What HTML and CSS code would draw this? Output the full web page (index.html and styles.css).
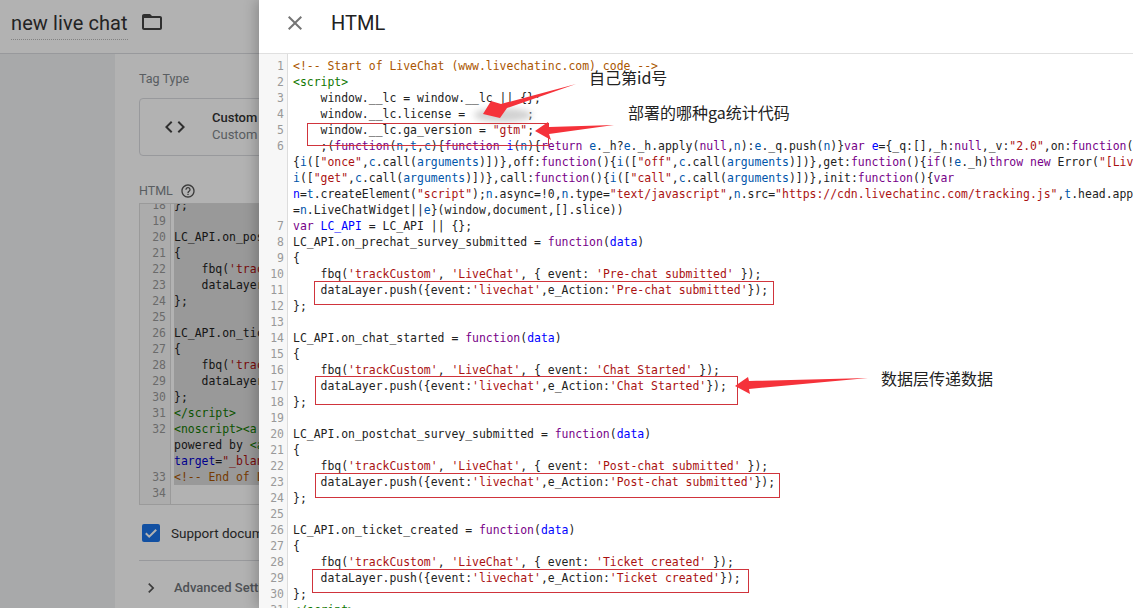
FILE: index.html
```html
<!DOCTYPE html>
<html lang="en">
<head>
<meta charset="utf-8">
<title>new live chat</title>
<link rel="stylesheet" href="styles.css">
</head>
<body>
<div class="app">
  <div class="under">
    <header class="topbar">
      <span class="title">new live chat</span>
      <svg class="folder" viewBox="0 0 24 24" width="24" height="24"><path d="M20 6h-8l-2-2H4c-1.1 0-1.99.9-1.99 2L2 18c0 1.1.9 2 2 2h16c1.1 0 2-.9 2-2V8c0-1.1-.9-2-2-2zm0 12H4V8h16v10z"/></svg>
    </header>
    <div class="stage">
      <section class="card">
        <div class="label">Tag Type</div>
        <div class="tile">
          <svg class="tile-icon" viewBox="0 0 24 24" width="24" height="24"><path d="M9.4 16.6 4.8 12l4.6-4.6L8 6l-6 6 6 6 1.4-1.4zm5.2 0 4.6-4.6-4.6-4.6L16 6l6 6-6 6-1.4-1.4z"/></svg>
          <div class="tile-text">
            <div class="tile-name">Custom HTML</div>
            <div class="tile-sub">Custom HTML Tag</div>
          </div>
        </div>
        <div class="html-label">
          <span class="label">HTML</span>
          <svg class="help" viewBox="0 0 24 24" width="16" height="16"><path d="M11 18h2v-2h-2v2zm1-16C6.48 2 2 6.48 2 12s4.48 10 10 10 10-4.48 10-10S17.52 2 12 2zm0 18c-4.41 0-8-3.59-8-8s3.590-8 8-8 8 3.590 8 8-3.590 8-8 8zm0-14c-2.210 0-4 1.790-4 4h2c0-1.100.9-2 2-2s2 .9 2 2c0 2-3 1.750-3 5h2c0-2.250 3-2.500 3-5 0-2.210-1.790-4-4-4z"/></svg>
        </div>
        <div class="mini-editor">
          <div class="mini-scroll">
            <div class="row"><span class="ln">18</span><code class="sel">};</code></div>
            <div class="row"><span class="ln">19</span><code class="sel"> </code></div>
            <div class="row"><span class="ln">20</span><code class="sel">LC_API.on_postchat_survey_submitted = <i class="k">function</i>(<i class="v">data</i>)</code></div>
            <div class="row"><span class="ln">21</span><code class="sel">{</code></div>
            <div class="row"><span class="ln">22</span><code class="sel">    fbq(<i class="s">'trackCustom'</i>, <i class="s">'LiveChat'</i>);</code></div>
            <div class="row"><span class="ln">23</span><code class="sel">    dataLayer.push({event:<i class="s">'livechat'</i>});</code></div>
            <div class="row"><span class="ln">24</span><code class="sel">};</code></div>
            <div class="row"><span class="ln">25</span><code class="sel"> </code></div>
            <div class="row"><span class="ln">26</span><code class="sel">LC_API.on_ticket_created = <i class="k">function</i>(<i class="v">data</i>)</code></div>
            <div class="row"><span class="ln">27</span><code class="sel">{</code></div>
            <div class="row"><span class="ln">28</span><code class="sel">    fbq(<i class="s">'trackCustom'</i>, <i class="s">'LiveChat'</i>);</code></div>
            <div class="row"><span class="ln">29</span><code class="sel">    dataLayer.push({event:<i class="s">'livechat'</i>});</code></div>
            <div class="row"><span class="ln">30</span><code class="sel">};</code></div>
            <div class="row"><span class="ln">31</span><code class="sel"><i class="t">&lt;/script&gt;</i></code></div>
            <div class="row"><span class="ln">32</span><code class="sel"><i class="t">&lt;noscript&gt;&lt;a</i> <i class="a">href</i>=<i class="s">"https://www.livechatinc.com/"</i></code></div>
            <div class="row"><span class="ln"></span><code class="sel">powered by <i class="t">&lt;a</i> <i class="a">href</i>=<i class="s">"https://www.livechatinc.com/"</i></code></div>
            <div class="row"><span class="ln"></span><code class="sel"><i class="a">target</i>=<i class="s">"_blank"</i>&gt;LiveChat&lt;/a&gt;</code></div>
            <div class="row"><span class="ln">33</span><code class="sel"><i class="c">&lt;!-- End of LiveChat code --&gt;</i></code></div>
            <div class="row"><span class="ln">34</span><code> </code></div>
          </div>
        </div>
        <div class="support">
          <svg class="checkbox" viewBox="0 0 18 18" width="18" height="18"><rect width="18" height="18" rx="2" fill="#1a73e8"/><path d="M3.8 9.300 7.200 12.700 14.200 5.700" fill="none" stroke="#fff" stroke-width="2"/></svg>
          <span class="support-text">Support document.write</span>
        </div>
        <div class="advanced">
          <svg class="chev" viewBox="0 0 24 24" width="20" height="20"><path d="M8.600 16.600 13.200 12 8.600 7.400 10 6l6 6-6 6z"/></svg>
          <span class="advanced-text">Advanced Settings</span>
        </div>
      </section>
    </div>
    <div class="scrim"></div>
  </div>

  <aside class="drawer">
    <header class="drawer-head">
      <svg class="close" viewBox="0 0 24 24" width="24" height="24"><path d="M19 6.400 17.600 5 12 10.600 6.400 5 5 6.400 10.600 12 5 17.600 6.400 19 12 13.400 17.600 19 19 17.600 13.400 12z"/></svg>
      <h1 class="drawer-title">HTML</h1>
    </header>
    <div class="editor">
      <div class="row"><span class="ln">1</span><code><i class="c">&lt;!-- Start of LiveChat (www.livechatinc.com) code --&gt;</i></code></div>
      <div class="row"><span class="ln">2</span><code><i class="t">&lt;script&gt;</i></code></div>
      <div class="row"><span class="ln">3</span><code>    window.__lc = window.__lc || {};</code></div>
      <div class="row"><span class="ln">4</span><code>    window.__lc.license =         ;</code></div>
      <div class="row"><span class="ln">5</span><code>    window.__lc.ga_version = <i class="s">"gtm"</i>;</code></div>
      <div class="row"><span class="ln">6</span><code>    ;(<i class="k">function</i>(<i class="v">n</i>,<i class="v">t</i>,<i class="v">c</i>){<i class="k">function</i> <i class="d">i</i>(<i class="v">n</i>){<i class="k">return</i> <i class="v">e</i>._h?<i class="v">e</i>._h.apply(<i class="k">null</i>,<i class="v">n</i>):<i class="v">e</i>._q.push(<i class="v">n</i>)}<i class="k">var</i> <i class="d">e</i>={_q:[],_h:<i class="k">null</i>,_v:<i class="s">"2.0"</i>,on:<i class="k">function</i>(){i(["on",c.call(arguments)])},once:<i class="k">function</i>()</code></div>
      <div class="row"><span class="ln"></span><code>{<i class="v">i</i>([<i class="s">"once"</i>,<i class="v">c</i>.call(<i class="v">arguments</i>)])},off:<i class="k">function</i>(){<i class="v">i</i>([<i class="s">"off"</i>,<i class="v">c</i>.call(<i class="v">arguments</i>)])},get:<i class="k">function</i>(){<i class="k">if</i>(!<i class="v">e</i>._h)<i class="k">throw</i> <i class="k">new</i> Error(<i class="s">"[LiveChatWidget] You can't use getters before load."</i>);</code></div>
      <div class="row"><span class="ln"></span><code><i class="v">i</i>([<i class="s">"get"</i>,<i class="v">c</i>.call(<i class="v">arguments</i>)])},call:<i class="k">function</i>(){<i class="v">i</i>([<i class="s">"call"</i>,<i class="v">c</i>.call(<i class="v">arguments</i>)])},init:<i class="k">function</i>(){<i class="k">var</i></code></div>
      <div class="row"><span class="ln"></span><code><i class="d">n</i>=<i class="v">t</i>.createElement(<i class="s">"script"</i>);<i class="v">n</i>.async=!0,<i class="v">n</i>.type=<i class="s">"text/javascript"</i>,<i class="v">n</i>.src=<i class="s">"https://cdn.livechatinc.com/tracking.js"</i>,<i class="v">t</i>.head.appendChild(<i class="v">n</i>)}};</code></div>
      <div class="row"><span class="ln"></span><code>=<i class="v">n</i>.LiveChatWidget||<i class="v">e</i>}(window,document,[].slice))</code></div>
      <div class="row"><span class="ln">7</span><code><i class="k">var</i> <i class="d">LC_API</i> = LC_API || {};</code></div>
      <div class="row"><span class="ln">8</span><code>LC_API.on_prechat_survey_submitted = <i class="k">function</i>(<i class="d">data</i>)</code></div>
      <div class="row"><span class="ln">9</span><code>{</code></div>
      <div class="row"><span class="ln">10</span><code>    fbq(<i class="s">'trackCustom'</i>, <i class="s">'LiveChat'</i>, { event: <i class="s">'Pre-chat submitted'</i> });</code></div>
      <div class="row"><span class="ln">11</span><code>    dataLayer.push({event:<i class="s">'livechat'</i>,e_Action:<i class="s">'Pre-chat submitted'</i>});</code></div>
      <div class="row"><span class="ln">12</span><code>};</code></div>
      <div class="row"><span class="ln">13</span><code> </code></div>
      <div class="row"><span class="ln">14</span><code>LC_API.on_chat_started = <i class="k">function</i>(<i class="d">data</i>)</code></div>
      <div class="row"><span class="ln">15</span><code>{</code></div>
      <div class="row"><span class="ln">16</span><code>    fbq(<i class="s">'trackCustom'</i>, <i class="s">'LiveChat'</i>, { event: <i class="s">'Chat Started'</i> });</code></div>
      <div class="row"><span class="ln">17</span><code>    dataLayer.push({event:<i class="s">'livechat'</i>,e_Action:<i class="s">'Chat Started'</i>});</code></div>
      <div class="row"><span class="ln">18</span><code>};</code></div>
      <div class="row"><span class="ln">19</span><code> </code></div>
      <div class="row"><span class="ln">20</span><code>LC_API.on_postchat_survey_submitted = <i class="k">function</i>(<i class="d">data</i>)</code></div>
      <div class="row"><span class="ln">21</span><code>{</code></div>
      <div class="row"><span class="ln">22</span><code>    fbq(<i class="s">'trackCustom'</i>, <i class="s">'LiveChat'</i>, { event: <i class="s">'Post-chat submitted'</i> });</code></div>
      <div class="row"><span class="ln">23</span><code>    dataLayer.push({event:<i class="s">'livechat'</i>,e_Action:<i class="s">'Post-chat submitted'</i>});</code></div>
      <div class="row"><span class="ln">24</span><code>};</code></div>
      <div class="row"><span class="ln">25</span><code> </code></div>
      <div class="row"><span class="ln">26</span><code>LC_API.on_ticket_created = <i class="k">function</i>(<i class="d">data</i>)</code></div>
      <div class="row"><span class="ln">27</span><code>{</code></div>
      <div class="row"><span class="ln">28</span><code>    fbq(<i class="s">'trackCustom'</i>, <i class="s">'LiveChat'</i>, { event: <i class="s">'Ticket created'</i> });</code></div>
      <div class="row"><span class="ln">29</span><code>    dataLayer.push({event:<i class="s">'livechat'</i>,e_Action:<i class="s">'Ticket created'</i>});</code></div>
      <div class="row"><span class="ln">30</span><code>};</code></div>
      <div class="row"><span class="ln">31</span><code><i class="t">&lt;/script&gt;</i></code></div>
    </div>
  </aside>

  <div class="smudge"></div>
  <svg class="markup" viewBox="0 0 1133 608" width="1133" height="608">
    <g class="boxes">
      <rect x="307.500" y="123.500" width="241" height="22"/>
      <rect x="314.500" y="281.500" width="459" height="23"/>
      <rect x="315.500" y="376.500" width="422" height="28"/>
      <rect x="315.500" y="473.500" width="464" height="24"/>
      <rect x="312.500" y="569.500" width="436" height="23"/>
    </g>
    <g class="arrows">
      <polygon points="576,84 507,108 500,118 483,114 491,101 501,104"/>
      <polygon points="614,125 549,134 551,140 535,131 548,122 549,127"/>
      <polygon points="868,378 749,389 750,394 735,386 748,377 749,381"/>
    </g>
  </svg>
  <span class="note note-id">自己第id号</span>
  <span class="note note-ga">部署的哪种ga统计代码</span>
  <span class="note note-data">数据层传递数据</span>
</div>
</body>
</html>
```

FILE: styles.css
```css
* { box-sizing: border-box; }
html, body { margin: 0; padding: 0; height: 100%; overflow: hidden; background: #fff; }
body { font-family: Roboto, "Liberation Sans", sans-serif; }

.app { position: relative; display: flex; width: 1133px; height: 608px; overflow: hidden; }

/* Page underneath the drawer */
.under { position: relative; flex: 0 0 259px; width: 259px; display: flex; flex-direction: column; overflow: hidden; background: #f1f3f4; }
.topbar { flex: 0 0 54px; display: flex; align-items: flex-start; gap: 12px; padding: 11px 0 0 11px; background: #fff; border-bottom: 1px solid #dadce0; }
.title { font-size: 20px; line-height: 24px; height: 29px; color: #333; letter-spacing: .1px; border-bottom: 1px dotted #bbb; white-space: nowrap; }
.folder { fill: #444; margin-top: -1px; flex: none; }
.stage { flex: 1; padding-left: 115px; min-height: 0; }
.card { width: 640px; height: 100%; background: #fff; padding: 17px 0 0 24px; }
.label { font-size: 12.500px; line-height: 16px; color: #80868b; }
.tile { display: flex; align-items: center; height: 58px; width: 480px; margin-top: 11px; border: 1px solid #dadce0; border-radius: 4px; padding-left: 23px; gap: 25px; }
.tile-icon { fill: #444; flex: none; }
.tile-text { padding-bottom: 2px; }
.tile-name { font-size: 13px; line-height: 17px; font-weight: 500; color: #333; white-space: nowrap; }
.tile-sub { font-size: 13px; line-height: 17px; color: #80868b; white-space: nowrap; }
.html-label { display: flex; align-items: center; gap: 7px; margin-top: 27px; height: 16px; }
.help { fill: #555; }
.mini-editor { height: 302px; width: 560px; margin-top: 4px; border: 1px solid #ddd; overflow: hidden; background: linear-gradient(90deg, #f7f7f7 30px, #ddd 30px, #ddd 31px, #fff 31px); }
.mini-scroll { margin-top: -7px; }
.support { display: flex; align-items: center; gap: 11px; margin-top: 18px; padding-left: 3px; height: 19px; }
.checkbox { flex: none; }
.support-text { font-size: 13.500px; color: #333; white-space: nowrap; }
.advanced { display: flex; align-items: center; gap: 13px; margin-top: 18px; height: 54px; border-top: 1px solid #dadce0; padding-left: 2px; }
.chev { fill: #555; flex: none; }
.advanced-text { font-size: 13px; font-weight: 500; color: #70757a; white-space: nowrap; }
.scrim { position: absolute; inset: 0; background: rgba(0, 0, 0, .3); }

/* Drawer */
.drawer { position: relative; flex: 1; min-width: 0; display: flex; flex-direction: column; background: #fff; box-shadow: -3px 0 12px rgba(0, 0, 0, .22); }
.drawer-head { flex: 0 0 54px; display: flex; align-items: center; gap: 24px; padding: 0 0 8px 24px; border-bottom: 1px solid #e0e0e0; }
.close { fill: #757575; flex: none; }
.drawer-title { margin: 0; font-size: 20px; line-height: 24px; font-weight: 400; color: #212121; }
.editor { flex: 1; min-height: 0; overflow: hidden; padding-top: 4px; background: linear-gradient(90deg, #f7f7f7 28px, #ddd 28px, #ddd 29px, #fff 29px); }

/* Code rows */
.row { display: flex; height: 16px; font-family: "DejaVu Sans Mono", "Liberation Mono", monospace; font-size: 11.450px; line-height: 16px; white-space: pre; }
.ln { flex: 0 0 25px; text-align: right; color: #999; }
.row code { font: inherit; padding-left: 9px; color: #222; }
.mini-editor .row .ln { flex: 0 0 26px; }
.mini-editor .row code { padding-left: 8px; }
.mini-editor .row .sel { flex: none; width: 500px; background: linear-gradient(90deg, transparent 8px, #dbdbdb 8px); }
.row i { font-style: normal; }
.k { color: #708; }
.v { color: #05a; }
.d { color: #00f; }
.s { color: #a11; }
.t { color: #170; }
.c { color: #a50; }
.a { color: #00c; }

/* Annotations over the screenshot */
.smudge { position: absolute; left: 474px; top: 108px; width: 58px; height: 14px; border-radius: 50%; background: #d2d2d2; filter: blur(3px); }
.markup { position: absolute; left: 0; top: 0; pointer-events: none; }
.boxes rect { fill: none; stroke: #d0343c; stroke-width: 1; }
.arrows polygon { fill: #f5323a; }
.note { position: absolute; font-family: "Noto Sans CJK SC", "Liberation Sans", sans-serif; font-size: 16px; line-height: 20px; color: #222; white-space: nowrap; }
.note-id { left: 589px; top: 67px; }
.note-ga { left: 628px; top: 102px; }
.note-data { left: 881px; top: 368px; }
```
